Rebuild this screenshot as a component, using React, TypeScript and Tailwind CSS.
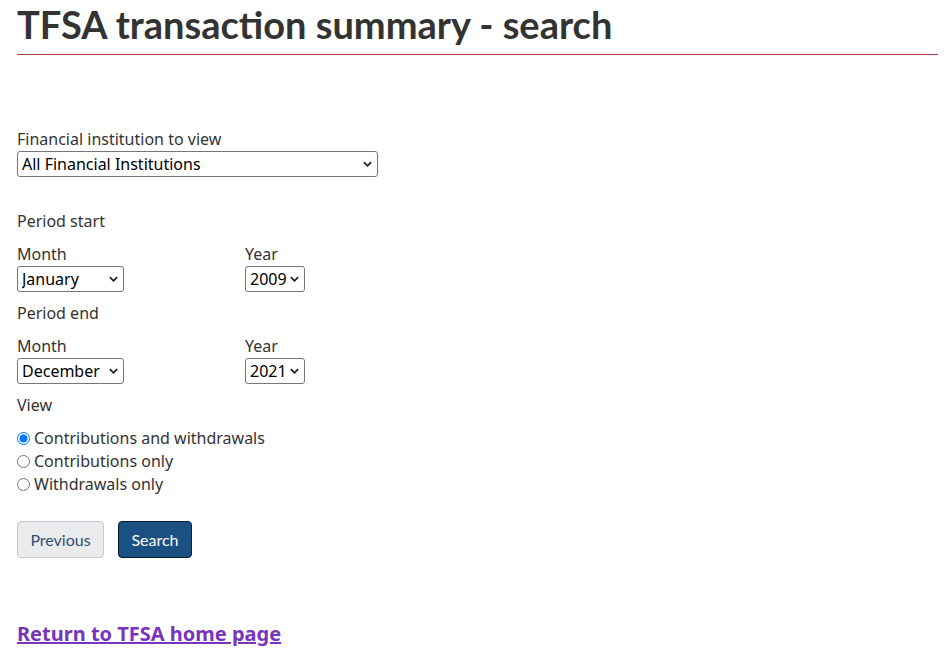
import React from 'react';

const months = [
  'January', 'February', 'March', 'April', 'May', 'June',
  'July', 'August', 'September', 'October', 'November', 'December',
];

const years = Array.from({ length: 13 }, (_, i) => String(2009 + i));

const Select: React.FC<{
  id: string;
  width: string;
  defaultValue?: string;
  options: string[];
}> = ({ id, width, defaultValue, options }) => (
  <div className={`relative ${width}`}>
    <select
      id={id}
      defaultValue={defaultValue}
      className="appearance-none w-full h-[26px] border border-[#767676] rounded-[3px] bg-white text-[16px] leading-[24px] text-black pl-[4px] pr-[16px] font-['Noto_Sans',sans-serif]"
    >
      {options.map((o) => (
        <option key={o}>{o}</option>
      ))}
    </select>
    <svg
      viewBox="0 0 10 6"
      className="pointer-events-none absolute right-[6px] top-[10px] w-[9px] h-[6px]"
    >
      <path d="M1 1 L5 5 L9 1" fill="none" stroke="#222" strokeWidth="2" />
    </svg>
  </div>
);

const PeriodRow: React.FC<{ title: string; month: string; year: string; id: string }> = ({
  title,
  month,
  year,
  id,
}) => (
  <div>
    <div>{title}</div>
    <div className="mt-[10px] flex">
      <div className="w-[228px] flex flex-col">
        <label htmlFor={`${id}-month`}>Month</label>
        <Select id={`${id}-month`} width="w-[107px]" defaultValue={month} options={months} />
      </div>
      <div className="flex flex-col">
        <label htmlFor={`${id}-year`}>Year</label>
        <Select id={`${id}-year`} width="w-[60px]" defaultValue={year} options={years} />
      </div>
    </div>
  </div>
);

export default function App() {
  const [view, setView] = React.useState('both');

  const radios = [
    { id: 'both', label: 'Contributions and withdrawals' },
    { id: 'contrib', label: 'Contributions only' },
    { id: 'withdraw', label: 'Withdrawals only' },
  ];

  return (
    <div className="min-h-screen bg-white text-[#333] font-['Noto_Sans',sans-serif] text-[16px] leading-[23px]">
      <div className="ml-[17px] w-[921px]">
        <h1 className="mt-[4px] pb-[8px] border-b border-[#af3c43] font-['Lato',sans-serif] font-bold text-[38px] leading-[1.1] text-[#333]">
          TFSA transaction summary - search
        </h1>

        <form className="mt-[73px]" onSubmit={(e) => e.preventDefault()}>
          <div className="flex flex-col items-start">
            <label htmlFor="fi">Financial institution to view</label>
            <Select id="fi" width="w-[361px]" options={['All Financial Institutions']} />
          </div>

          <div className="mt-[33px]">
            <PeriodRow title="Period start" month="January" year="2009" id="start" />
          </div>
          <div className="mt-[10px]">
            <PeriodRow title="Period end" month="December" year="2021" id="end" />
          </div>

          <div className="mt-[10px]">
            <div>View</div>
            <div className="mt-[10px] flex flex-col">
              {radios.map((r) => (
                <label key={r.id} className="flex items-center">
                  <input
                    type="radio"
                    name="view"
                    checked={view === r.id}
                    onChange={() => setView(r.id)}
                    className="m-0 mr-[4px] w-[13px] h-[13px]"
                  />
                  {r.label}
                </label>
              ))}
            </div>
          </div>

          <div className="mt-[25px] flex gap-[14px]">
            <button
              type="button"
              className="h-[37px] w-[87px] rounded-[4px] border border-[#c5c8cc] bg-[#eaebed] text-[#335075] font-['Lato',sans-serif] text-[16px]"
            >
              Previous
            </button>
            <button
              type="submit"
              className="h-[37px] w-[74px] rounded-[4px] border border-[#091c2d] bg-[#1b5083] text-white font-['Lato',sans-serif] text-[16px]"
            >
              Search
            </button>
          </div>
        </form>

        <div className="mt-[62px]">
          <a href="#" className="text-[#7834bc] underline font-bold text-[20px] leading-[28px]">
            Return to TFSA home page
          </a>
        </div>
      </div>
    </div>
  );
}
